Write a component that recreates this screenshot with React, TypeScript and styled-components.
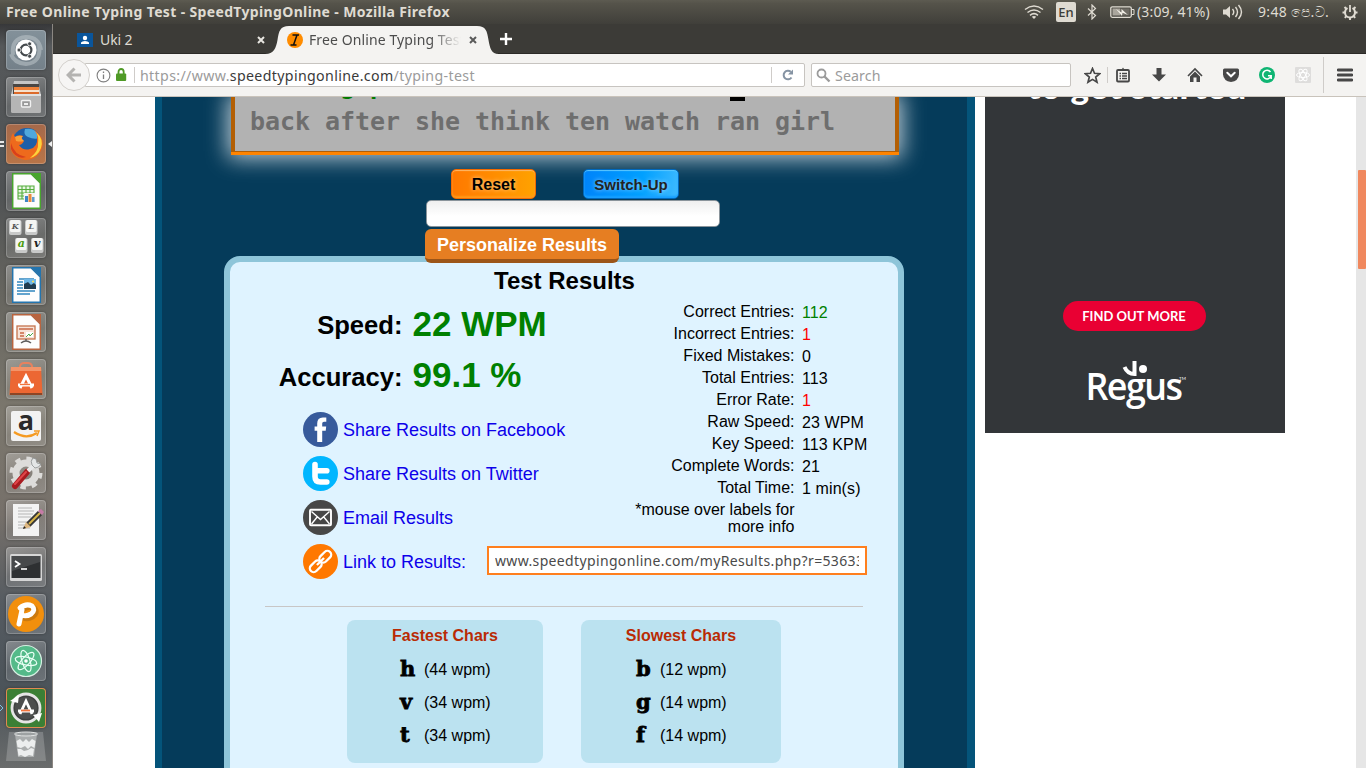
import React from 'react';
import styled, { createGlobalStyle } from 'styled-components';

const UI = "'Noto Sans', 'Open Sans', sans-serif";
const ARIAL = "'Liberation Sans', Arial, sans-serif";

const Global = createGlobalStyle`
  * { box-sizing: border-box; }
  body { margin: 0; background: #fff; overflow: hidden; font-family: ${ARIAL}; }
  svg { display: block; flex: none; }
`;

const Desktop = styled.div`
  width: 1366px;
  height: 768px;
  display: flex;
  flex-direction: column;
  overflow: hidden;
`;

/* ---------- top panel ---------- */
const Panel = styled.header`
  height: 24px;
  flex: none;
  display: flex;
  align-items: center;
  padding: 0 8px 0 6px;
  background: linear-gradient(#5d5b51 0, #55534a 15%, #403f3a 100%);
  color: #dfdbd2;
  font-family: ${UI};
`;
const WindowTitle = styled.div`
  font-size: 14px;
  font-weight: 700;
  line-height: 24px;
  letter-spacing: 0.35px;
  white-space: nowrap;
  flex: 1;
`;
const Indicator = styled.div<{ $w: number; $track?: number }>`
  width: ${p => p.$w}px;
  flex: none;
  display: flex;
  align-items: center;
  font-size: 14px;
  letter-spacing: ${p => p.$track || 0.05}px;
  line-height: 24px;
  white-space: nowrap;
`;
const LangBadge = styled.span`
  width: 20px;
  height: 20px;
  border-radius: 2px;
  background: #dfdbd2;
  color: #3c3b37;
  font-size: 13px;
  font-weight: 500;
  line-height: 20px;
  text-align: center;
`;

/* ---------- launcher ---------- */
const Workspace = styled.div`
  display: flex;
  flex: 1;
  min-height: 0;
`;
const Launcher = styled.nav`
  width: 53px;
  flex: none;
  display: flex;
  flex-direction: column;
  gap: 7px;
  padding: 6px 0 0 6px;
  border-right: 1px solid #8b8782;
  background: linear-gradient(#37383a 0, #56595b 3%, #4f5254 22%, #66655f 36%, #7b776d 52%, #76706a 66%, #555b61 78%, #4b5359 90%, #6a6c6c 100%);
`;
const Tile = styled.div<{ $bg?: string; $edge?: string }>`
  position: relative;
  width: 40px;
  height: 40px;
  flex: none;
  border-radius: 4px;
  background: ${p => p.$bg || 'linear-gradient(160deg, rgba(255,255,255,.3), rgba(255,255,255,.1) 55%, rgba(255,255,255,.18))'};
  box-shadow: inset 0 0 0 1px ${p => p.$edge || 'rgba(255,255,255,.2)'}, 0 0 3px rgba(0,0,0,.35);
`;
const Pip = styled.svg<{ $side: 'left' | 'right' }>`
  position: absolute;
  top: 15px;
  ${p => (p.$side === 'left' ? 'left: -6px;' : 'right: -6px;')}
`;
const TrashSlot = styled.div`
  margin-top: -5px;
`;

/* ---------- browser chrome ---------- */
const Browser = styled.main`
  flex: 1;
  min-width: 0;
  display: flex;
  flex-direction: column;
`;
const TabStrip = styled.div`
  height: 30px;
  flex: none;
  display: flex;
  align-items: center;
  background: #3c3b37;
  border-bottom: 1px solid #2b2a27;
  font-family: ${UI};
  font-size: 14px;
`;
const Tab = styled.div<{ $w: number; $pad: number; $active?: boolean }>`
  position: relative;
  width: ${p => p.$w}px;
  height: 30px;
  flex: none;
  display: flex;
  align-items: center;
  padding-left: ${p => p.$pad}px;
  padding-top: 2px;
  margin-bottom: -1px;
  color: ${p => (p.$active ? '#4c4c4c' : '#dfdbd2')};
`;
const TabShape = styled.svg`
  position: absolute;
  left: 0;
  top: 0;
`;
const TabLabel = styled.span<{ $w: number; $fade?: boolean }>`
  position: relative;
  width: ${p => p.$w}px;
  margin: 0 ${p => (p.$fade ? 8 : 3)}px 0 ${p => (p.$fade ? 6 : 7)}px;
  overflow: hidden;
  white-space: nowrap;
  line-height: 22px;
  letter-spacing: ${p => (p.$fade ? 0.1 : -0.1)}px;
  ${p => p.$fade && 'mask-image: linear-gradient(90deg, #000 80%, transparent 100%);'}
`;
const Raised = styled.svg`position: relative;`;

const Toolbar = styled.div`
  position: relative;
  height: 43px;
  flex: none;
  display: flex;
  align-items: center;
  background: #f4f3f1;
  border-bottom: 1px solid #c9c3bb;
  padding-left: 5px;
  z-index: 2;
`;
const BackButton = styled.div`
  position: relative;
  z-index: 1;
  width: 32px;
  height: 32px;
  border-radius: 50%;
  border: 1px solid #d3d0cc;
  background: #f6f5f4;
  display: flex;
  align-items: center;
  justify-content: center;
`;
const UrlBar = styled.div`
  width: 720px;
  height: 24px;
  margin-left: -5px;
  border: 1px solid #c7c4c0;
  border-radius: 0 2px 2px 0;
  background: #fff;
  display: flex;
  align-items: center;
  padding-left: 10px;
`;
const FieldText = styled.span<{ $w?: number }>`
  ${p => p.$w && `width: ${p.$w}px;`}
  padding-top: 1px;
  font-family: ${UI};
  font-size: 14.2px;
  line-height: 22px;
  letter-spacing: ${p => (p.$w ? 0.35 : 0.1)}px;
  color: #9b9b9b;
  white-space: nowrap;
  b { font-weight: 400; color: #3a3a3a; }
`;
const Rule = styled.i<{ $h: number; $l: number; $r: number }>`
  width: 1px;
  height: ${p => p.$h}px;
  background: #cfccc9;
  margin: 0 ${p => p.$r}px 0 ${p => p.$l}px;
  flex: none;
`;
const SearchBox = styled.div`
  width: 260px;
  height: 24px;
  margin-left: 6px;
  border: 1px solid #c7c4c0;
  border-radius: 2px;
  background: #fff;
  display: flex;
  align-items: center;
  gap: 4px;
  padding-left: 4px;
`;
const ToolSlot = styled.div<{ $w?: number }>`
  width: ${p => p.$w || 36}px;
  display: flex;
  justify-content: center;
  flex: none;
`;

/* ---------- web page ---------- */
const Viewport = styled.div`
  flex: 1;
  min-height: 0;
  display: flex;
  align-items: flex-start;
  background: #fff;
  overflow: hidden;
`;
const Site = styled.div`
  width: 820px;
  height: 671px;
  flex: none;
  margin-left: 102px;
  border: solid #04547a;
  border-width: 0 8px 0 7px;
  background: #053b5a;
  display: flex;
  flex-direction: column;
  align-items: flex-start;
  overflow: hidden;
`;
const TypingBox = styled.div`
  width: 668px;
  height: 58px;
  flex: none;
  margin-left: 69px;
  border: solid #b35f04;
  border-width: 0 4px 1px;
  background: #b2b2b2;
  box-shadow: 0 0 22px 3px rgba(255, 255, 255, 0.75);
  display: flex;
  flex-direction: column;
`;
const TypingEdge = styled.div`
  height: 3px;
  margin: auto -4px -1px;
  background: #ff8400;
  box-shadow: 0 -1px 0 #b35f04;
`;
const TypedLine = styled.div`
  height: 6px;
  display: flex;
  align-items: flex-end;
  overflow: hidden;
  color: #007a00;
  padding-left: 105px;
  font: 700 25px/20px 'DejaVu Sans Mono', monospace;
  letter-spacing: -0.05px;
  white-space: pre;
`;
const TypedText = styled.span`
  height: 27px;
  width: 390px;
`;
const Caret = styled.i`
  width: 15px;
  height: 4px;
  background: #000;
  align-self: flex-start;
`;
const PromptLine = styled.div`
  padding-left: 15px;
  font: 700 25px/38px 'DejaVu Sans Mono', monospace;
  letter-spacing: -0.05px;
  color: #6e6e6e;
  white-space: nowrap;
`;
const ButtonRow = styled.div`
  height: 30px;
  flex: none;
  display: flex;
  margin: 14px 0 0 289px;
  gap: 47px;
`;
const GlossButton = styled.button<{ $tone: 'orange' | 'blue' }>`
  width: ${p => (p.$tone === 'orange' ? 85 : 96)}px;
  height: 30px;
  padding: 0;
  border-radius: 5px;
  border: 1.5px solid ${p => (p.$tone === 'orange' ? '#f26a00' : '#0068bd')};
  background: ${p => (p.$tone === 'orange'
    ? 'linear-gradient(90deg, #ff7800, #ffa200)'
    : 'linear-gradient(100deg, #0083fa, #00a0ff 60%, #3fbaff)')};
  box-shadow: inset 0 1px 1px ${p => (p.$tone === 'orange' ? '#ffb868' : '#5cc8ff')}, inset 0 -2px 2px ${p => (p.$tone === 'orange' ? '#ff9a1a' : '#18a0ff')};
  color: ${p => (p.$tone === 'orange' ? '#000' : '#222')};
  text-shadow: 0 0 4px rgba(255, 255, 255, 0.6);
  font: 700 ${p => (p.$tone === 'orange' ? 16 : 15)}px/27px ${ARIAL};
`;
const EntryField = styled.div`
  width: 294px;
  height: 27px;
  flex: none;
  margin: 1px 0 0 264px;
  border: 1px solid #8a949b;
  border-radius: 5px;
  background: linear-gradient(#efefef, #fff 60%);
`;
const PersonalizeButton = styled.button`
  position: relative;
  width: 194px;
  height: 34px;
  flex: none;
  padding: 2px 0 0;
  margin: 2px 0 -7px 263px;
  border: 0;
  border-bottom: 4px solid #9c5518;
  border-radius: 6px;
  background: #e67e22;
  color: #fff;
  font: 700 18px/28px ${ARIAL};
`;
const Results = styled.section`
  width: 680px;
  height: 540px;
  flex: none;
  margin-left: 62px;
  border: 6px solid #8ec5d9;
  border-radius: 16px;
  background: #dff3ff;
  color: #000;
`;
const ResultsTitle = styled.h2`
  margin: 5px 0 4px;
  padding-left: 1px;
  font: 700 24px/28px ${ARIAL};
  text-align: center;
`;
const Columns = styled.div`
  display: flex;
  height: 245px;
`;
const Left = styled.div`width: 388px;`;
const Metric = styled.div<{ $h: number }>`
  display: flex;
  height: ${p => p.$h}px;
  font-weight: 700;
`;
const MetricLabel = styled.span`
  width: 172.5px;
  text-align: right;
  font-size: 25.6px;
  line-height: 52px;
`;
const MetricValue = styled.span<{ $lh: number }>`
  margin-left: 10px;
  font-size: 35px;
  line-height: ${p => p.$lh}px;
  color: #008000;
`;
const ShareRow = styled.div`
  display: flex;
  height: 35px;
  margin: 0 0 9px 73px;
`;
const ShareLink = styled.a`
  margin-left: 5px;
  width: 144px;
  white-space: nowrap;
  font-size: 18px;
  line-height: 37px;
  color: #0d00ea;
`;
const LinkField = styled.div`
  width: 380px;
  height: 29px;
  margin-top: 2px;
  border: 2px solid #ff7f1e;
  background: #fff;
  padding: 0 6px;
  font: 14px/26px ${UI};
  letter-spacing: 0.35px;
  color: #4a4a4a;
`;
const Clip = styled.div`
  overflow: hidden;
  white-space: nowrap;
`;
const Stats = styled.div`
  padding-top: 2px;
  font-size: 16px;
`;
const StatRow = styled.div`
  display: flex;
  gap: 7.5px;
  height: 22px;
  line-height: 22px;
  white-space: nowrap;
`;
const StatLabel = styled.span`
  width: 176.5px;
  text-align: right;
`;
const StatValue = styled.span<{ $c?: string }>`
  padding-top: 1px;
  letter-spacing: 0.1px;
  color: ${p => p.$c || '#000'};
`;
const Note = styled.p`
  width: 176.5px;
  margin: 2px 0 0;
  line-height: 17px;
  text-align: right;
`;
const Divider = styled.div`
  width: 598px;
  height: 1px;
  margin: 27px 0 13px 35px;
  background: #c8c6c6;
`;
const Cards = styled.div`
  display: flex;
  gap: 38px;
  margin-left: 117px;
`;
const CharCard = styled.div<{ $w: number }>`
  width: ${p => p.$w}px;
  height: 143px;
  border-radius: 8px;
  background: #bbe2f0;
  padding-top: 6px;
`;
const CardTitle = styled.h3`
  margin: 0 0 7px;
  font: 700 16px/20px ${ARIAL};
  color: #b92b04;
  text-align: center;
`;
const CharRow = styled.div<{ $pad: number }>`
  display: flex;
  height: 33px;
  line-height: 33px;
  font-size: 16px;
  padding-left: ${p => p.$pad}px;
`;
const CharGlyph = styled.b`
  width: 24px;
  font: 700 21px/31px 'DejaVu Serif', serif;
  -webkit-text-stroke: 0.8px #000;
`;
const Ad = styled.aside`
  width: 300px;
  height: 336px;
  margin-left: 10px;
  background: #333639;
  display: flex;
  flex-direction: column;
  align-items: center;
  overflow: hidden;
  color: #fff;
`;
const AdHeadline = styled.div`
  height: 20px;
  width: 216px;
  white-space: nowrap;
  font: 900 35px/20px Lato, sans-serif;
  letter-spacing: 0.6px;
  margin: -22px 0 206px;
`;
const AdButton = styled.div`
  width: 143px;
  height: 30px;
  margin: 0 2px 27px 0;
  border-radius: 15px;
  background: #e90033;
  font: 700 13px/31px Lato, sans-serif;
  text-align: center;
`;
const Scrollbar = styled.div`
  width: 10px;
  height: 671px;
  margin-left: auto;
  background: #e6e6e6;
  padding: 73px 0 0 2px;
`;
const Thumb = styled.div`
  height: 99px;
  background: #f0885e;
  border-radius: 1px;
`;

/* ---------- launcher icons ---------- */
const I = ({ children }: { children: React.ReactNode }) => (
  <svg width="40" height="40" viewBox="0 0 40 40">{children}</svg>
);

const Dash = () => (
  <I>
    <path d="M7 25Q5 8 20 7Q33 7 35 20M33 14Q36 33 20 34Q8 33 5 24" fill="none" stroke="#c4ccd0" strokeOpacity=".5" strokeWidth="4" />
    <circle cx="20" cy="20" r="10.500" fill="#fff" />
    <circle cx="20" cy="20" r="5.400" fill="none" stroke="#44494c" strokeWidth="2.200" />
    <g fill="#44494c" stroke="#fff" strokeWidth=".8"><circle cx="13" cy="20" r="2" /><circle cx="23.600" cy="13.800" r="2" /><circle cx="23.600" cy="26.200" r="2" /></g>
  </I>
);
const Files = () => (
  <I>
    <path d="M8 4H32L35 18H5Z" fill="#c5c5c5" />
    <rect x="7" y="7" width="26" height="10" fill="#4a4643" />
    <rect x="8" y="10" width="25" height="3" fill="#f08239" /><rect x="8" y="13" width="25" height="2" fill="#f6e0cb" /><rect x="8" y="15" width="25" height="2" fill="#dc6a2a" />
    <rect x="5" y="17" width="30" height="19" rx="1.500" fill="#b5b5b5" />
    <rect x="5" y="17" width="30" height="2" fill="#e0e0e0" />
    <rect x="15.500" y="23.500" width="9" height="6.500" rx="1" fill="#989898" stroke="#f1f1f1" strokeWidth="1.400" />
    <rect x="18" y="26" width="4" height="2" fill="#eee" />
  </I>
);
const FirefoxIcon = () => (
  <I>
    <circle cx="21" cy="19" r="15" fill="#1d5fa8" />
    <path d="M19 5Q30 3 34 14Q28 16 22 13Q17 11 19 5Z" fill="#4fa8dc" />
    <path d="M28 6Q39 13 36 24Q32 36 19 36Q5 34 4 21Q4 14 7 9L9 13Q12 10 17 12Q14 15 18 17Q16 21 13 21Q17 27 24 25Q32 23 31 14Q32 10 28 6Z" fill="#ee6a1c" />
    <path d="M30 8Q38 15 35 24Q32 32 24 34Q33 27 32 19Q33 12 30 8Z" fill="#fcd23c" />
    <path d="M5 19Q8 31 20 33Q10 36 5 25Z" fill="#d8401c" />
    <path d="M9 13Q13 11 17 12Q14 14 18 17Q14 18 10 17Z" fill="#f9a23a" />
  </I>
);
const DocSheet = ({ tone, children }: { tone: string; children: React.ReactNode }) => (
  <I>
    <path d="M6.700 2.700H25L34.300 12V37.300H6.700Z" fill="#fdfdfd" stroke={tone} strokeWidth="1.500" />
    <path d="M25 2H35V12Z" fill={tone} />
    {children}
  </I>
);
const CalcArt = () => (
  <DocSheet tone="#48a52d">
    <path d="M12 15H28V28H12ZM12 18.500H28M12 22H28M12 25H28M16 15V28M20 15V28M24 15V28" fill="#e9f6e4" stroke="#55ad3c" strokeWidth="1.100" />
    <rect x="18" y="22" width="11" height="9" fill="#f4f4f4" />
    <rect x="19" y="25" width="3" height="6" fill="#3d86c6" /><rect x="22.500" y="23" width="3" height="8" fill="#e98b3b" /><rect x="26" y="26" width="2.500" height="5" fill="#5f9bd0" />
  </DocSheet>
);
const WriterArt = () => (
  <DocSheet tone="#2374ae">
    <path d="M11 17H17M11 20H17M11 23H17M11 26H29M11 29H24M13 14H28" stroke="#3186bf" strokeWidth="1.700" />
    <rect x="18" y="14" width="12" height="10" fill="#6db7e8" /><path d="M18 24V19L22 17L25 20L28 18L30 20V24Z" fill="#203c50" /><circle cx="27" cy="16.500" r="1" fill="#ffe252" />
  </DocSheet>
);
const ImpressArt = () => (
  <DocSheet tone="#b9643f">
    <rect x="11" y="14" width="18" height="13" fill="#f7e3d8" stroke="#c5734d" strokeWidth="1.300" />
    <path d="M13 17H27M14 21H18M14 24H18" stroke="#c96a45" strokeWidth="1.600" />
    <rect x="20" y="20" width="7" height="5" fill="#fff" /><path d="M20 25L23 22L24 24L27 21" stroke="#4aa84a" fill="none" />
    <path d="M20 27V29M15 31Q20 27 25 31" stroke="#5c5c5c" strokeWidth="1.500" fill="none" />
  </DocSheet>
);
const Keycaps = () => {
  const keys = [
    { x: 3, y: 2, t: 'K', c: '#555' },
    { x: 19, y: 2, t: 'L', c: '#666' },
    { x: 9, y: 20, t: 'a', c: '#4a9a10' },
    { x: 25, y: 20, t: 'v', c: '#222' },
  ];
  return (
    <I>
      {keys.map(k => (
        <g key={k.t}>
          <rect x={k.x} y={k.y} width="12.500" height="15" rx="2" fill="#c8c9c8" />
          <rect x={k.x + 1} y={k.y} width="10.500" height="12" rx="1.500" fill="#f4f5f3" />
          <text x={k.x + 6.3} y={k.y + 9} textAnchor="middle" fontFamily="DejaVu Serif" fontStyle="italic" fontWeight="700" fontSize={k.y > 10 ? 11 : 8} fill={k.c}>{k.t}</text>
        </g>
      ))}
    </I>
  );
};
const Bag = () => (
  <I>
    <path d="M14 10V7Q15 4 18 4H22Q25 4 26 7V10" fill="none" stroke="#e7815e" strokeWidth="2" />
    <path d="M5 8H35L36.500 36H3.500Z" fill="#ec6733" /><path d="M5 8H35L35.300 12H4.700Z" fill="#f39469" /><path d="M4 34H36V36H4Z" fill="#8c4525" />
    <path d="M14 29L20 17L26 29M12 26H28" fill="none" stroke="#fff" strokeWidth="3" />
    <path d="M14 25.500H24" stroke="#f2753d" strokeWidth="1.300" />
  </I>
);
const Amazon = () => (
  <I>
    <rect x="5" y="5" width="30" height="30" rx="2" fill="#f2f2f2" />
    <text x="20" y="24" textAnchor="middle" fontFamily="Open Sans" fontWeight="700" fontSize="27" fill="#2a2a2a">a</text>
    <path d="M8 26Q20 34 31 27" fill="none" stroke="#f59a20" strokeWidth="2.200" /><path d="M28 25L33 25L31 30" fill="none" stroke="#f59a20" strokeWidth="1.500" />
  </I>
);
const Settings = () => (
  <I>
    <circle cx="20" cy="20" r="10" fill="none" stroke="#dddcda" strokeWidth="7" />
    <circle cx="20" cy="20" r="14.500" fill="none" stroke="#dddcda" strokeWidth="4" strokeDasharray="5.400 5.980" />
    <path d="M9 33L21 19" stroke="#a81b20" strokeWidth="6" strokeLinecap="round" />
    <path d="M9 31L20 19" stroke="#e0464a" strokeWidth="2" strokeLinecap="round" />
    <path d="M22 18L29 11" stroke="#e8e9e9" strokeWidth="4" />
    <path d="M27 5Q24 8 26 12L29 15Q33 15 35 11L31 10L30 6Z" fill="#e4e6e6" stroke="#8d9191" strokeWidth=".8" />
  </I>
);
const Gedit = () => (
  <I>
    <rect x="7" y="4" width="26" height="32" fill="#f3f3f3" />
    <path d="M12 8H26M12 11H28M12 14H27M12 17H25M12 22H22M12 25H19M12 28H24" stroke="#b5b5b5" />
    <path d="M22 25L34 13" stroke="#383838" strokeWidth="6" /><path d="M23 24L34 13" stroke="#d7b447" strokeWidth="2" />
    <path d="M32 11L35 9L38 12L36 15Z" fill="#c67ba7" /><path d="M17 29L20 22L25 27Z" fill="#dfb881" /><path d="M17 29L18 26L20 28Z" fill="#222" />
  </I>
);
const Terminal = () => (
  <I>
    <rect x="4" y="7" width="32" height="27" rx="1.500" fill="#d6d6d6" />
    <rect x="5.500" y="9" width="29" height="22" fill="#2e3032" />
    <path d="M6 9H34V15L6 24Z" fill="#47494b" />
    <path d="M9 14L13.500 17L9 20" fill="none" stroke="#fff" strokeWidth="1.800" /><path d="M15 22H21" stroke="#fff" strokeWidth="1.600" />
  </I>
);
const OrangeP = () => (
  <I>
    <circle cx="20" cy="20" r="18" fill="#f28f0c" />
    <path d="M15 14Q22 9 27 13Q30 17 25 21Q20 24 16 22" fill="none" stroke="#a66512" strokeWidth="6" strokeLinecap="round" transform="translate(1.500 1.500)" opacity=".5" />
    <path d="M14 14Q20 9 26 12Q30 16 25 20Q20 23 16 21" fill="none" stroke="#fff" strokeWidth="5" strokeLinecap="round" />
    <path d="M16 16L13 30" stroke="#fff" strokeWidth="5" strokeLinecap="round" />
  </I>
);
const AtomArt = () => (
  <I>
    <circle cx="20" cy="20" r="15.500" fill="#54ba89" stroke="#d6efe2" strokeWidth="1.200" />
    <g fill="none" stroke="#e9fff5" strokeWidth="1.200">
      <ellipse cx="20" cy="20" rx="11" ry="4" transform="rotate(12 20 20)" /><ellipse cx="20" cy="20" rx="11" ry="4" transform="rotate(72 20 20)" /><ellipse cx="20" cy="20" rx="11" ry="4" transform="rotate(132 20 20)" />
    </g>
    <circle cx="20" cy="20" r="1.800" fill="#fff" />
  </I>
);
const Updater = () => (
  <I>
    <circle cx="20" cy="20" r="14" fill="#3f4140" stroke="#e5e5e5" strokeWidth="2.800" />
    <circle cx="20" cy="20" r="11" fill="#4c4e4d" />
    <path d="M14 26L20 13L26 26M12 23H28" fill="none" stroke="#fff" strokeWidth="2.800" /><path d="M15 22.500H24" stroke="#f2753d" strokeWidth="1.800" />
    <path d="M4 13L13 7L12 15Z" fill="#fff" /><path d="M27 27L36 25L33 34Z" fill="#fff" />
  </I>
);
const Trash = () => (
  <svg width="40" height="34" viewBox="0 0 40 34">
    <path d="M3 2H37L40 31H0Z" fill="#fff" fillOpacity=".2" />
    <path d="M9 4H31L28 27H12Z" fill="#b9bcbc" fillOpacity=".75" />
    <ellipse cx="20" cy="4" rx="11.500" ry="2" fill="#9da1a2" stroke="#e1e3e3" />
    <path d="M10.500 11L14 9L17 12L20 9L23 12L26 9L29.500 11L28.500 18L25 16L22 19L19 16L15 18L11.500 17ZM11.500 19L15 19L18 21L22 20L25 18L28 19L27 26L23 25L19 27L15 25L12.500 26Z" fill="#eceeee" />
  </svg>
);

const tiles: { art: React.ReactNode; bg?: string; edge?: string; pips?: 'focus' | 'run' }[] = [
  { art: <Dash />, bg: 'linear-gradient(#83919a, #748089)' },
  { art: <Files /> },
  { art: <FirefoxIcon />, bg: 'linear-gradient(#a5694a, #b87548)', pips: 'focus' },
  { art: <CalcArt /> },
  { art: <Keycaps /> },
  { art: <WriterArt /> },
  { art: <ImpressArt /> },
  { art: <Bag /> },
  { art: <Amazon /> },
  { art: <Settings /> },
  { art: <Gedit /> },
  { art: <Terminal /> },
  { art: <OrangeP /> },
  { art: <AtomArt /> },
  { art: <Updater />, bg: '#3b7f35', edge: '#e08a50', pips: 'run' },
];

/* ---------- share icons ---------- */
const Round = ({ fill, children }: { fill: string; children: React.ReactNode }) => (
  <svg width="35" height="35" viewBox="0 0 35 35"><circle cx="17.500" cy="17.500" r="17.500" fill={fill} />{children}</svg>
);
const FacebookMark = () => (
  <Round fill="#375a9b"><path d="M14.200 30V18.800H11.600V14.600H14.200V11.500Q14.200 5.400 19.800 5.400H23.300V9.700H21Q19.200 9.700 19.200 11.600V14.600H23.200L22.700 18.800H19.200V30Z" fill="#fff" /></Round>
);
const TwitterMark = () => (
  <Round fill="#00b6ff"><path d="M12 8.500V20.500Q12 26 17.500 26H23.800M12 14.700H23.800" fill="none" stroke="#fff" strokeWidth="5.600" strokeLinecap="round" strokeLinejoin="round" /></Round>
);
const MailMark = () => (
  <Round fill="#474747"><g fill="none" stroke="#fff"><rect x="7" y="9.700" width="21" height="15.600" rx="1" strokeWidth="1.900" /><path d="M8.500 11.500L17.500 19.500L26.500 11.500M8.500 24L14.200 17M26.500 24L20.800 17" strokeWidth="1.400" /></g></Round>
);
const LinkMark = () => (
  <Round fill="#ff7800">
    <g fill="none" stroke="#fff" strokeWidth="2.300" transform="rotate(-45 17.500 17.500)">
      <rect x="4" y="13.700" width="13.500" height="7.600" rx="3.800" /><rect x="17.500" y="13.700" width="13.500" height="7.600" rx="3.800" />
      <path d="M12.500 17.500H22.500" strokeWidth="2.300" />
    </g>
  </Round>
);

const shares = [
  { icon: <FacebookMark />, label: 'Share Results on Facebook' },
  { icon: <TwitterMark />, label: 'Share Results on Twitter' },
  { icon: <MailMark />, label: 'Email Results' },
];
const stats: [string, string, string?][] = [
  ['Correct Entries:', '112', '#008000'],
  ['Incorrect Entries:', '1', '#ff0000'],
  ['Fixed Mistakes:', '0'],
  ['Total Entries:', '113'],
  ['Error Rate:', '1', '#ff0000'],
  ['Raw Speed:', '23 WPM'],
  ['Key Speed:', '113 KPM'],
  ['Complete Words:', '21'],
  ['Total Time:', '1 min(s)'],
];
const cards = [
  { title: 'Fastest Chars', w: 196, pad: 53, rows: [['h', '44'], ['v', '34'], ['t', '34']] },
  { title: 'Slowest Chars', w: 200, pad: 55, rows: [['b', '12'], ['g', '14'], ['f', '14']] },
];

const CloseX = ({ color }: { color: string }) => (
  <Raised width="8" height="8" viewBox="0 0 8 8"><path d="M1 1L7 7M7 1L1 7" stroke={color} strokeWidth="2" /></Raised>
);

const TopPanel = () => (
  <Panel>
    <WindowTitle>Free Online Typing Test - SpeedTypingOnline - Mozilla Firefox</WindowTitle>
    <Indicator $w={32}>
      <svg width="20" height="16" viewBox="0 0 20 16" fill="none" stroke="#dfdbd2" strokeWidth="1.500"><path d="M1 5.500Q10 -1.500 19 5.500M3.500 8.500Q10 3.300 16.500 8.500M6 11.300Q10 8 14 11.300" /><path d="M7.800 12.700Q10 11.200 12.200 12.700L10 15Z" fill="#dfdbd2" stroke="none" /></svg>
    </Indicator>
    <Indicator $w={31}><LangBadge>En</LangBadge></Indicator>
    <Indicator $w={23}>
      <svg width="10" height="16" viewBox="0 0 10 16" fill="none" stroke="#dfdbd2" strokeWidth="1.200"><path d="M1 4.500L8.500 11.500L5 15V1L8.500 4.500L1 11.500" /></svg>
    </Indicator>
    <Indicator $w={27}>
      <svg width="25" height="14" viewBox="0 0 25 14"><rect x=".8" y="1.800" width="20.500" height="10.500" rx="1.500" fill="none" stroke="#dfdbd2" strokeWidth="1.300" /><rect x="2.500" y="3.500" width="7.500" height="7" fill="#aaa69d" /><rect x="10" y="3.500" width="9.500" height="7" fill="#6f6c65" /><path d="M22 4.500H24V9.500H22" fill="none" stroke="#dfdbd2" /><path d="M6 4L11.500 7.500L11.500 4L18 10L12.500 7.800L12 11Z" fill="#f2efe7" /></svg>
    </Indicator>
    <Indicator $w={86} $track={0.15}>(3:09, 41%)</Indicator>
    <Indicator $w={35}>
      <svg width="20" height="16" viewBox="0 0 20 16"><path d="M0 5.500H3L7 2V14L3 10.500H0Z" fill="#dfdbd2" /><path d="M9.500 5Q12 8 9.500 11M12.500 3Q16.500 8 12.500 13M15.500 1Q21.500 8 15.500 15" fill="none" stroke="#dfdbd2" strokeWidth="1.400" /></svg>
    </Indicator>
    <Indicator $w={84} $track={0.35}>9:48 පෙ.ව.</Indicator>
    <svg width="16" height="16" viewBox="0 0 16 16" fill="none" stroke="#dfdbd2"><path d="M5.500 4Q3 5.500 3 8.500A5 5 0 0 0 13 8.500Q13 5.500 10.500 4" strokeWidth="2" /><path d="M8 1V8" strokeWidth="1.800" /><path d="M.5 8.500H3M13 8.500H15.500M2.500 3L4.500 5M13.500 3L11.500 5M2.800 13.800L4.500 12M13.200 13.800L11.500 12M8 13.500V16" strokeWidth="1.900" /></svg>
  </Panel>
);

const Tabs = () => (
  <TabStrip>
    <Tab $w={212} $pad={24}>
      <svg width="16" height="14" viewBox="0 0 16 14"><rect width="16" height="14" fill="#0a559b" /><circle cx="8" cy="5" r="2.200" fill="#fff" /><path d="M4 11V9.500Q5 8 8 8T12 9.500V11Z" fill="#fff" /></svg>
      <TabLabel $w={158}>Uki 2</TabLabel>
      <CloseX color="#e8e6e1" />
    </Tab>
    <Tab $w={234} $pad={22} $active>
      <TabShape width="234" height="30" viewBox="0 0 234 30"><path d="M0 30C9 30 11 24 12.500 16C14 7 15 2 24 2H212C221 2 222 7 223.500 16C225 24 226 30 234 30Z" fill="#f4f3f1" /></TabShape>
      <Raised width="16" height="16" viewBox="0 0 16 16"><circle cx="8" cy="8" r="8" fill="#ff8c00" /><path d="M5.500 3H12M10 3L6.500 13M3.500 13H9.500" stroke="#111" strokeWidth="1.500" /></Raised>
      <TabLabel $w={152} $fade>Free Online Typing Test - Spe</TabLabel>
      <CloseX color="#5a5a5a" />
    </Tab>
    <svg width="14" height="14" viewBox="0 0 14 14"><path d="M7 1V13M1 7H13" stroke="#fff" strokeWidth="2.400" /></svg>
  </TabStrip>
);

const NavBar = () => (
  <Toolbar>
    <BackButton>
      <svg width="16" height="16" viewBox="0 0 16 16"><path d="M8.500 1.500L2 8L8.500 14.500M2 8H15" fill="none" stroke="#b4b3b1" strokeWidth="3" /></svg>
    </BackButton>
    <UrlBar>
      <svg width="15" height="15" viewBox="0 0 15 15"><circle cx="7.500" cy="7.500" r="6.400" fill="none" stroke="#7f7f7f" strokeWidth="1.100" /><path d="M7.500 6.500V11M7.500 3.500V5" stroke="#7f7f7f" strokeWidth="1.300" /></svg>
      <svg width="20" height="14" viewBox="0 0 20 14"><path d="M7.500 6V4A2.600 3 0 0 1 12.700 4V6" fill="none" stroke="#4f9a26" strokeWidth="1.800" /><rect x="5" y="5.500" width="10.200" height="7.500" rx="1" fill="#4f9a26" /></svg>
      <Rule $h={16} $l={3} $r={5} />
      <FieldText $w={630}>https://www.<b>speedtypingonline.com</b>/typing-test</FieldText>
      <Rule $h={16} $l={1} $r={10} />
      <svg width="12" height="12" viewBox="0 0 12 12"><path d="M9.500 8.500A4.300 4.300 0 1 1 8.800 2.800" fill="none" stroke="#8593a3" strokeWidth="2" /><path d="M11 .5V5.500H6Z" fill="#8593a3" /></svg>
    </UrlBar>
    <SearchBox>
      <svg width="15" height="15" viewBox="0 0 15 15"><circle cx="5.500" cy="5.500" r="4" fill="none" stroke="#9b9b9b" strokeWidth="1.800" /><path d="M8.500 8.500L13.500 13.500" stroke="#9b9b9b" strokeWidth="2.400" /></svg>
      <FieldText>Search</FieldText>
    </SearchBox>
    <ToolSlot $w={42}>
      <svg width="17" height="17" viewBox="0 0 17 17"><path d="M8.500 1.500L10.500 6.300L15.700 6.700L11.700 10L13 15.200L8.500 12.400L4 15.200L5.300 10L1.300 6.700L6.500 6.300Z" fill="none" stroke="#474747" strokeWidth="1.700" /></svg>
    </ToolSlot>
    <Rule $h={16} $l={-6} $r={-3} />
    <ToolSlot>
      <svg width="16" height="16" viewBox="0 0 16 16"><rect x="2" y="3" width="12" height="11.500" rx="1" fill="none" stroke="#474747" strokeWidth="1.800" /><path d="M5 3.500V2H7L8 .5L9 2H11V3.500Z" fill="#474747" /><path d="M4.500 6.500H6M7 6.500H12M4.500 9H6M7 9H12M4.500 11.500H6M7 11.500H12" stroke="#474747" strokeWidth="1.300" /></svg>
    </ToolSlot>
    <ToolSlot>
      <svg width="16" height="16" viewBox="0 0 16 16"><path d="M5.500 1H10.500V7.500H15L8 14.500L1 7.500H5.500Z" fill="#474747" /></svg>
    </ToolSlot>
    <ToolSlot>
      <svg width="16" height="16" viewBox="0 0 16 16"><path d="M1 9L8 2L15 9" fill="none" stroke="#474747" strokeWidth="1.600" /><path d="M8 4.500L13 9.500V15H9.500V10.500H6.500V15H3V9.500Z" fill="#474747" /></svg>
    </ToolSlot>
    <ToolSlot>
      <svg width="16" height="16" viewBox="0 0 16 16"><path d="M1.500 1.500H14.500Q16 1.500 16 3V7.500Q15.500 14 8 15Q.5 14 0 7.500V3Q0 1.500 1.500 1.500Z" fill="#474747" /><path d="M4.300 5.800L8 9.300L11.700 5.800" fill="none" stroke="#fff" strokeWidth="2" strokeLinecap="round" /></svg>
    </ToolSlot>
    <ToolSlot>
      <svg width="16" height="16" viewBox="0 0 16 16"><circle cx="8" cy="8" r="8" fill="#0fb573" /><path d="M11.500 5A4.300 4.300 0 1 0 12 9.300M9 8.700H12.200V12" fill="none" stroke="#fff" strokeWidth="1.500" /></svg>
    </ToolSlot>
    <ToolSlot>
      <svg width="16" height="16" viewBox="0 0 16 16"><rect width="16" height="16" rx="1" fill="#dedddc" /><g fill="none" stroke="#fff" strokeWidth="1"><ellipse cx="8" cy="8" rx="6.500" ry="2.500" /><ellipse cx="8" cy="8" rx="6.500" ry="2.500" transform="rotate(60 8 8)" /><ellipse cx="8" cy="8" rx="6.500" ry="2.500" transform="rotate(120 8 8)" /></g></svg>
    </ToolSlot>
    <Rule $h={36} $l={2} $r={13} />
    <svg width="16" height="14" viewBox="0 0 16 14"><path d="M1 2H15M1 7H15M1 12H15" stroke="#474747" strokeWidth="2.800" strokeLinecap="round" /></svg>
  </Toolbar>
);

const RegusLogo = () => (
  <svg width="104" height="56" viewBox="0 0 104 56">
    <text x="2.500" y="42" fontFamily="Open Sans" fontWeight="600" fontSize="37" letterSpacing="-1.600" textLength="96" lengthAdjust="spacingAndGlyphs" fill="#fff">Regus</text>
    <path d="M41.500 9Q44.500 16 51.500 16V3" fill="none" stroke="#fff" strokeWidth="4" />
    <circle cx="60" cy="11" r="4" fill="#fff" />
    <text x="96" y="22" fontFamily="Lato" fontSize="4.500" fill="#fff">TM</text>
  </svg>
);

const ResultsPanel = () => (
  <Results>
    <ResultsTitle>Test Results</ResultsTitle>
    <Columns>
      <Left>
        <Metric $h={52}><MetricLabel>Speed:</MetricLabel><MetricValue $lh={50}>22 WPM</MetricValue></Metric>
        <Metric $h={61}><MetricLabel>Accuracy:</MetricLabel><MetricValue $lh={48}>99.1 %</MetricValue></Metric>
        {shares.map(s => (
          <ShareRow key={s.label}>{s.icon}<ShareLink>{s.label}</ShareLink></ShareRow>
        ))}
      </Left>
      <Stats>
        {stats.map(([label, value, c]) => (
          <StatRow key={label}><StatLabel>{label}</StatLabel><StatValue $c={c}>{value}</StatValue></StatRow>
        ))}
        <Note>*mouse over labels for more info</Note>
      </Stats>
    </Columns>
    <ShareRow>
      <LinkMark />
      <ShareLink>Link to Results:</ShareLink>
      <LinkField><Clip>www.speedtypingonline.com/myResults.php?r=53633</Clip></LinkField>
    </ShareRow>
    <Divider />
    <Cards>
      {cards.map(card => (
        <CharCard key={card.title} $w={card.w}>
          <CardTitle>{card.title}</CardTitle>
          {card.rows.map(([ch, n]) => (
            <CharRow key={ch} $pad={card.pad}><CharGlyph>{ch}</CharGlyph>({n} wpm)</CharRow>
          ))}
        </CharCard>
      ))}
    </Cards>
  </Results>
);

export default function App() {
  return (
    <Desktop>
      <Global />
      <TopPanel />
      <Workspace>
        <Launcher>
          {tiles.map((t, i) => (
            <Tile key={i} $bg={t.bg} $edge={t.edge}>
              {t.art}
              {t.pips === 'focus' && (
                <>
                  <Pip $side="left" width="4" height="10" viewBox="0 0 4 10"><path d="M0 3H4M0 7H4" stroke="#e8e8e8" strokeWidth="1.800" /></Pip>
                  <Pip $side="right" width="4" height="10" viewBox="0 0 4 10"><path d="M4 2V8L0 5Z" fill="#f0f0f0" /></Pip>
                </>
              )}
              {t.pips === 'run' && (
                <Pip $side="left" width="4" height="10" viewBox="0 0 4 10"><path d="M0 2L3 5L0 8" fill="none" stroke="#7ec3e6" /></Pip>
              )}
            </Tile>
          ))}
          <TrashSlot><Trash /></TrashSlot>
        </Launcher>
        <Browser>
          <Tabs />
          <NavBar />
          <Viewport>
            <Site>
              <TypingBox>
                <TypedLine><TypedText>g p</TypedText><Caret /></TypedLine>
                <PromptLine>back after she think ten watch ran girl</PromptLine>
                <TypingEdge />
              </TypingBox>
              <ButtonRow>
                <GlossButton $tone="orange">Reset</GlossButton>
                <GlossButton $tone="blue">Switch-Up</GlossButton>
              </ButtonRow>
              <EntryField />
              <PersonalizeButton>Personalize Results</PersonalizeButton>
              <ResultsPanel />
            </Site>
            <Ad>
              <AdHeadline>to get started</AdHeadline>
              <AdButton>FIND OUT MORE</AdButton>
              <RegusLogo />
            </Ad>
            <Scrollbar><Thumb /></Scrollbar>
          </Viewport>
        </Browser>
      </Workspace>
    </Desktop>
  );
}
